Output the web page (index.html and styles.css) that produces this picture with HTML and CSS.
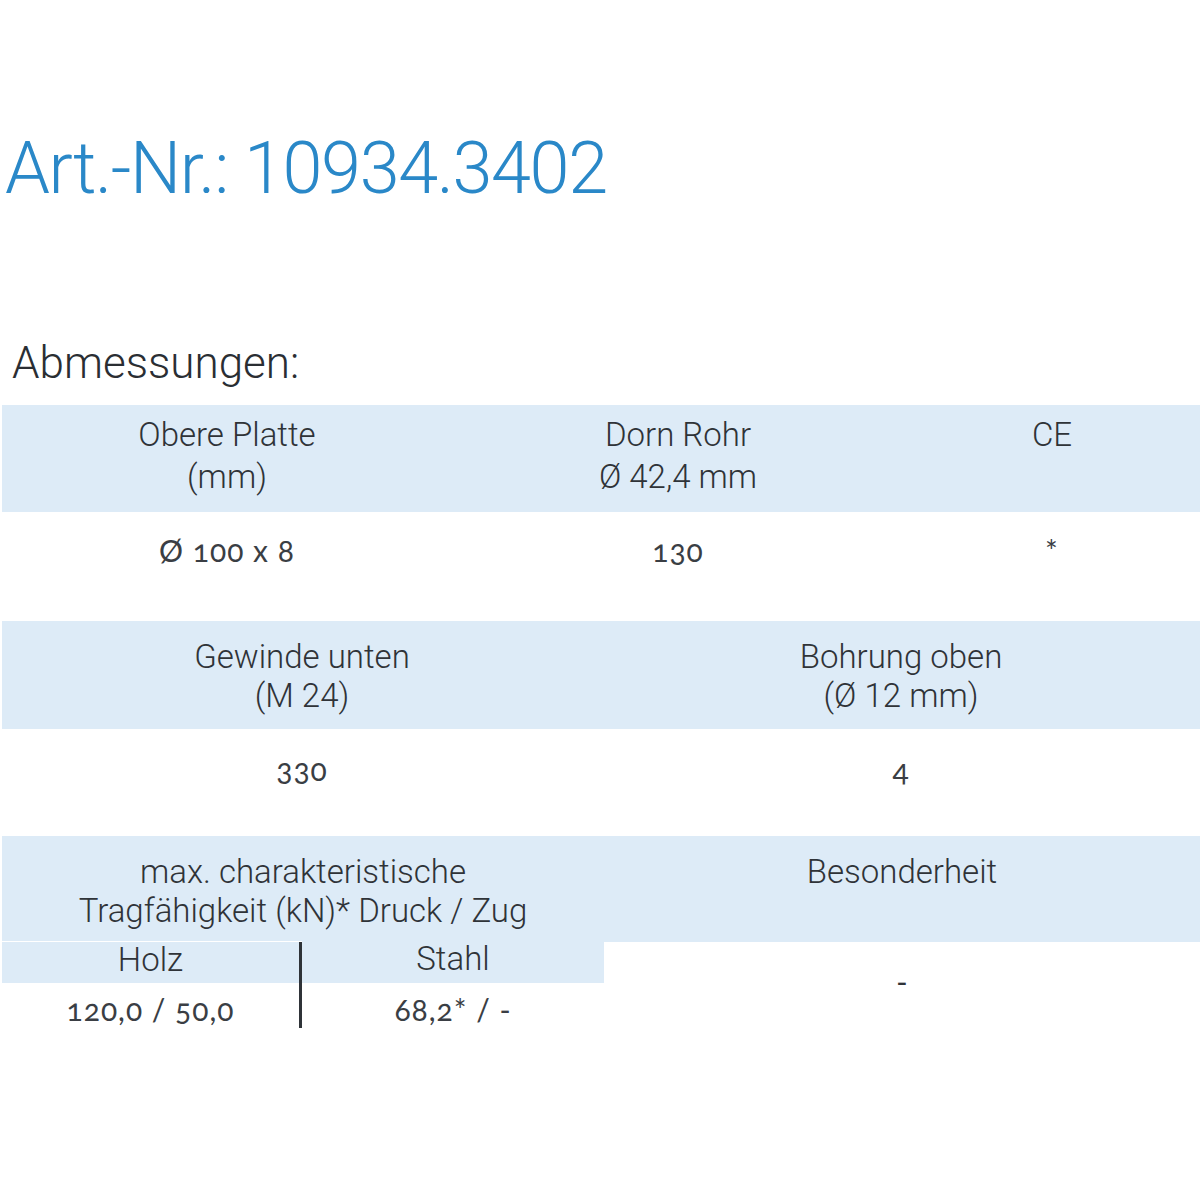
FILE: index.html
```html
<!DOCTYPE html>
<html lang="de">
<head>
<meta charset="utf-8">
<title>Art.-Nr.: 10934.3402</title>
<link rel="stylesheet" href="styles.css">
</head>
<body>
<div class="page">
  <h1 class="title">Art.-Nr.: 10934.3402</h1>
  <h2 class="subtitle">Abmessungen:</h2>

  <div class="spec spec-3">
    <div class="head">Obere Platte<br>(mm)</div>
    <div class="head">Dorn Rohr<br>Ø 42,4 mm</div>
    <div class="head">CE</div>
    <div class="val">Ø 100 x 8</div>
    <div class="val">130</div>
    <div class="val">*</div>
  </div>

  <div class="spec spec-2">
    <div class="head">Gewinde unten<br>(M 24)</div>
    <div class="head">Bohrung oben<br>(Ø 12 mm)</div>
    <div class="val">330</div>
    <div class="val">4</div>
  </div>

  <div class="spec-last">
    <div class="load">
      <div class="load-head">max. charakteristische<br>Tragfähigkeit (kN)* Druck / Zug</div>
      <div class="load-grid">
        <div class="sub-head sep">Holz</div>
        <div class="sub-head">Stahl</div>
        <div class="sub-val sep">120,0 / 50,0</div>
        <div class="sub-val">68,2* / -</div>
      </div>
    </div>
    <div class="extra">
      <div class="extra-head">Besonderheit</div>
      <div class="extra-val">-</div>
    </div>
  </div>
</div>
</body>
</html>
```
FILE: styles.css
```css
html, body {
  margin: 0;
  padding: 0;
  background: #ffffff;
}
.page {
  padding: 0 0 0 2px;
  font-family: Roboto, "Liberation Sans", sans-serif;
  color: #2f3338;
}
.title {
  margin: 0;
  padding: 127px 0 0 3px;
  font-size: 72px;
  line-height: 84px;
  font-weight: 300;
  color: #2a88c8;
  letter-spacing: -1.4px;
}
.subtitle {
  margin: 0;
  padding: 124px 0 0 10px;
  font-size: 44px;
  line-height: 56px;
  font-weight: 300;
  color: #2a2e33;
  height: 70px;
}
.spec {
  display: grid;
  text-align: center;
}
.spec-3 {
  grid-template-columns: 450px 452px 1fr;
  grid-template-rows: 107px 89px;
  margin-bottom: 20px;
}
.spec-2 {
  grid-template-columns: 600px 1fr;
  grid-template-rows: 108px 107px;
}
.head {
  background: #ddebf7;
  font-size: 33px;
  line-height: 42px;
  font-weight: 300;
  padding-top: 9px;
  color: #2f3338;
}
.spec-2 .head {
  padding-top: 16px;
  line-height: 39px;
}
.val {
  font-family: Lato, Roboto, sans-serif;
  font-variant-numeric: oldstyle-nums;
  font-weight: 400;
  font-size: 30px;
  letter-spacing: 1px;
  line-height: 42px;
  padding-top: 17px;
  color: #3a3e44;
}
.spec-2 .val {
  padding-top: 19px;
}
.spec-last {
  display: grid;
  grid-template-columns: 602px 1fr;
  text-align: center;
}
.load-head {
  background: #ddebf7;
  font-size: 33px;
  line-height: 39px;
  font-weight: 300;
  padding-top: 16px;
  height: 89px;
}
.load-grid {
  display: grid;
  grid-template-columns: 300px 1fr;
}
.sub-head {
  background: #ddebf7;
  font-size: 33px;
  line-height: 36px;
  font-weight: 300;
  padding-bottom: 5px;
}
.sep {
  border-right: 3px solid #2f3338;
}
.sub-head.sep {
  margin-top: 1px;
}
.sub-val {
  font-family: Lato, Roboto, sans-serif;
  font-variant-numeric: oldstyle-nums;
  font-weight: 400;
  font-size: 30px;
  letter-spacing: 1px;
  line-height: 38px;
  padding-top: 7px;
  color: #3a3e44;
}
.extra-head {
  background: #ddebf7;
  font-size: 33px;
  line-height: 39px;
  font-weight: 300;
  padding-top: 16px;
  height: 90px;
}
.extra-val {
  font-size: 32px;
  line-height: 42px;
  padding-top: 19px;
}
```
